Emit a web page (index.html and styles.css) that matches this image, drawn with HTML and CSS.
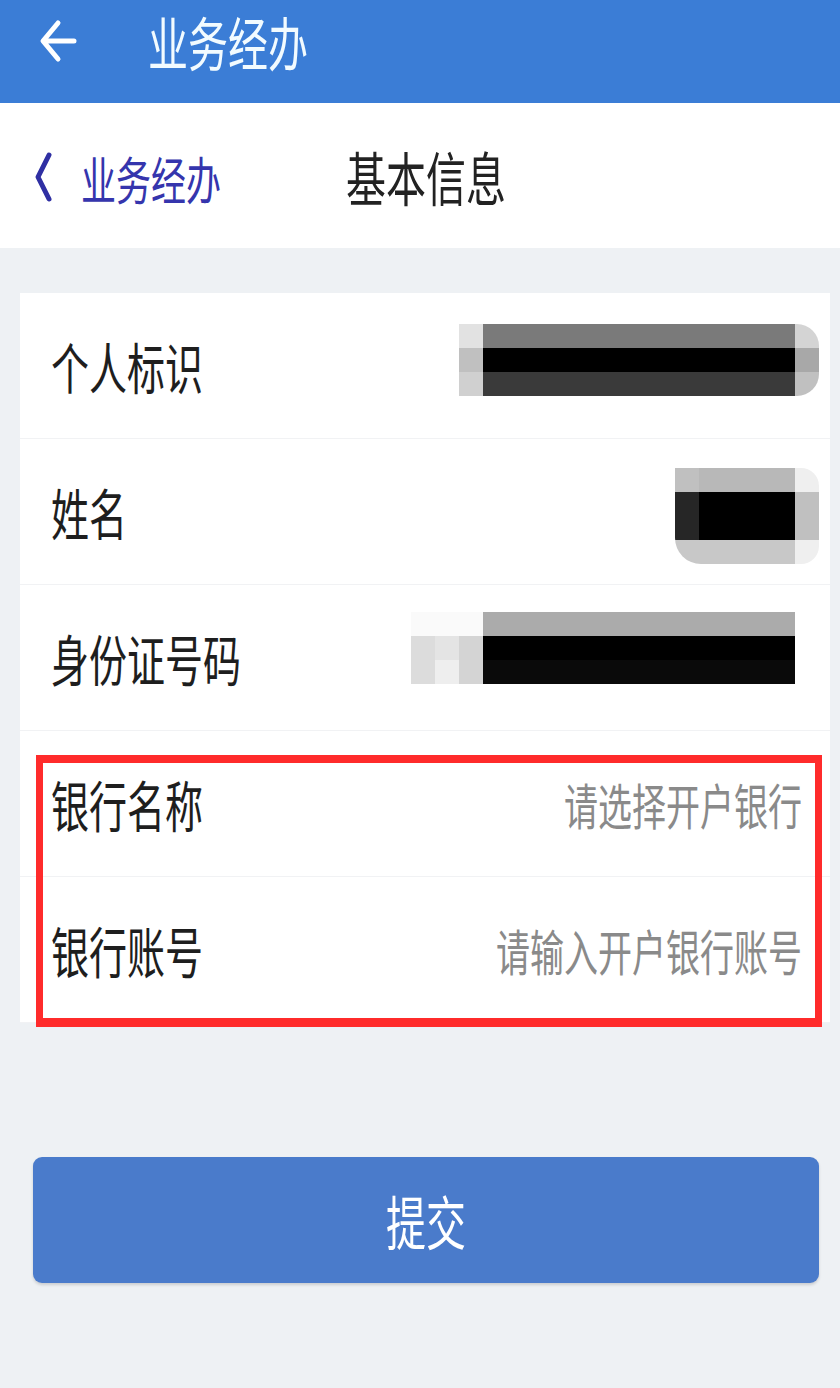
FILE: index.html
```html
<!DOCTYPE html>
<html lang="zh-CN">
<head>
    <meta charset="UTF-8">
    <meta name="viewport" content="width=device-width, initial-scale=1.0">
    <title>业务经办</title>
    <link rel="stylesheet" href="styles.css">
</head>
<body>
    <header class="topbar">
        <svg class="back-arrow" width="40" height="48" viewBox="0 0 40 48">
            <path d="M36 24 H6 M20 6 L5 24 L20 42" fill="none" stroke="#fff" stroke-width="5" stroke-linecap="round" stroke-linejoin="round"/>
        </svg>
        <span class="topbar-title tall">业务经办</span>
    </header>

    <nav class="navbar">
        <a class="nav-back" href="#">
            <svg width="20" height="52" viewBox="0 0 20 52">
                <path d="M15 4 L4 26 L15 48" fill="none" stroke="#2f2fa3" stroke-width="5" stroke-linecap="round" stroke-linejoin="round"/>
            </svg>
            <span class="tall">业务经办</span>
        </a>
        <span class="nav-title tall">基本信息</span>
    </nav>

    <main class="page">
        <div class="card">
            <div class="row">
                <span class="label tall">个人标识</span>
                <div class="mask mask-id">
                    <i class="c-e2"></i><i class="c-7a"></i><i class="c-d4"></i>
                    <i class="c-c0"></i><i class="c-00"></i><i class="c-a8"></i>
                    <i class="c-d0"></i><i class="c-3a"></i><i class="c-c0"></i>
                </div>
            </div>
            <div class="row">
                <span class="label tall">姓名</span>
                <div class="mask mask-name">
                    <i class="c-c0"></i><i class="c-b8"></i><i class="c-ef"></i>
                    <i class="c-26"></i><i class="c-00"></i><i class="c-c0"></i>
                    <i class="c-c8"></i><i class="c-c8"></i><i class="c-ef"></i>
                </div>
            </div>
            <div class="row">
                <span class="label tall">身份证号码</span>
                <div class="mask mask-card">
                    <i class="c-fa"></i><i class="c-fa"></i><i class="c-fa"></i><i class="c-ab"></i>
                    <i class="c-dc"></i><i class="c-e4"></i><i class="c-d4"></i><i class="c-00"></i>
                    <i class="c-dc"></i><i class="c-ee"></i><i class="c-d4"></i><i class="c-0a"></i>
                </div>
            </div>
            <div class="row">
                <span class="label tall">银行名称</span>
                <span class="placeholder tall">请选择开户银行</span>
            </div>
            <div class="row">
                <span class="label tall">银行账号</span>
                <span class="placeholder tall">请输入开户银行账号</span>
            </div>

            <!-- cadre rouge d'annotation -->
            <div class="highlight"></div>
        </div>

        <button class="submit"><span class="tall">提交</span></button>
    </main>
</body>
</html>
```

FILE: styles.css
```css
body {
    margin: 0;
    font-family: "Noto Sans CJK SC", "Noto Sans", sans-serif;
    background-color: #eef1f4;
    width: 840px;
    min-height: 1388px;
}

/* la capture d'origine est étirée en hauteur */
.tall {
    display: inline-block;
    transform: scaleY(1.45);
}

.topbar {
    height: 103px;
    background-color: #3b7dd6;
    display: flex;
    align-items: center;
    padding-left: 38px;
    padding-bottom: 22px;
    box-sizing: border-box;
    box-shadow: 0 2px 3px rgba(0, 0, 0, 0.12);
}

.back-arrow {
    display: block;
}

.topbar-title {
    margin-left: 70px;
    color: #f2fbff;
    font-size: 40px;
    line-height: 1;
}

.navbar {
    height: 145px;
    background-color: #fff;
    display: flex;
    align-items: center;
    padding-left: 34px;
}

.nav-back {
    display: flex;
    align-items: center;
    text-decoration: none;
    color: #3535ad;
    font-size: 35px;
    margin-top: 3px;
}

.nav-back span {
    margin-left: 27px;
}

.nav-title {
    margin-left: 125px;
    color: #222;
    font-size: 40px;
}

.page {
    padding: 45px 10px 0 20px;
}

.card {
    position: relative;
    background-color: #fff;
}

.row {
    height: 146px;
    display: flex;
    align-items: center;
    justify-content: space-between;
    padding: 0 11px 0 31px;
    border-bottom: 1px solid #f1f2f4;
    box-sizing: border-box;
}

.row:last-of-type {
    border-bottom: none;
}

.label {
    color: #1e1e1e;
    font-size: 38px;
}

.placeholder {
    color: #8a8a8a;
    font-size: 34px;
    margin-right: 17px;
}

/* blocs floutés */
.mask {
    display: grid;
    overflow: hidden;
}

.mask i {
    display: block;
}

.mask-id {
    grid-template-columns: 24px 312px 24px;
    grid-template-rows: 24px 24px 24px;
    border-radius: 0 22px 22px 0;
    margin-bottom: 12px;
}

.mask-name {
    grid-template-columns: 24px 96px 24px;
    grid-template-rows: 24px 48px 24px;
    border-radius: 0 18px 18px 26px;
    margin-top: 8px;
}

.mask-card {
    grid-template-columns: 24px 24px 24px 312px;
    grid-template-rows: 24px 24px 24px;
    margin-right: 24px;
    margin-bottom: 20px;
}

.c-00 { background-color: #000; }
.c-0a { background-color: #0a0a0a; }
.c-26 { background-color: #262626; }
.c-3a { background-color: #3a3a3a; }
.c-7a { background-color: #7a7a7a; }
.c-a8 { background-color: #a8a8a8; }
.c-ab { background-color: #ababab; }
.c-b8 { background-color: #b8b8b8; }
.c-c0 { background-color: #c0c0c0; }
.c-c8 { background-color: #c8c8c8; }
.c-d0 { background-color: #d0d0d0; }
.c-d4 { background-color: #d4d4d4; }
.c-dc { background-color: #dcdcdc; }
.c-e2 { background-color: #e2e2e2; }
.c-e4 { background-color: #e4e4e4; }
.c-ee { background-color: #eeeeee; }
.c-ef { background-color: #efefef; }
.c-fa { background-color: #fafafa; }

.highlight {
    position: absolute;
    left: 16px;
    top: 462px;
    width: 786px;
    height: 272px;
    border-style: solid;
    border-color: #ff2b2b;
    border-width: 8px 7px 9px 7px;
    box-sizing: border-box;
}

.submit {
    display: block;
    width: 786px;
    height: 126px;
    margin: 134px 0 0 13px;
    background-color: #4a7bcb;
    color: #fff;
    border: none;
    border-radius: 9px;
    font-family: inherit;
    font-size: 40px;
    box-shadow: 0 2px 3px rgba(0, 0, 0, 0.15);
}
```
